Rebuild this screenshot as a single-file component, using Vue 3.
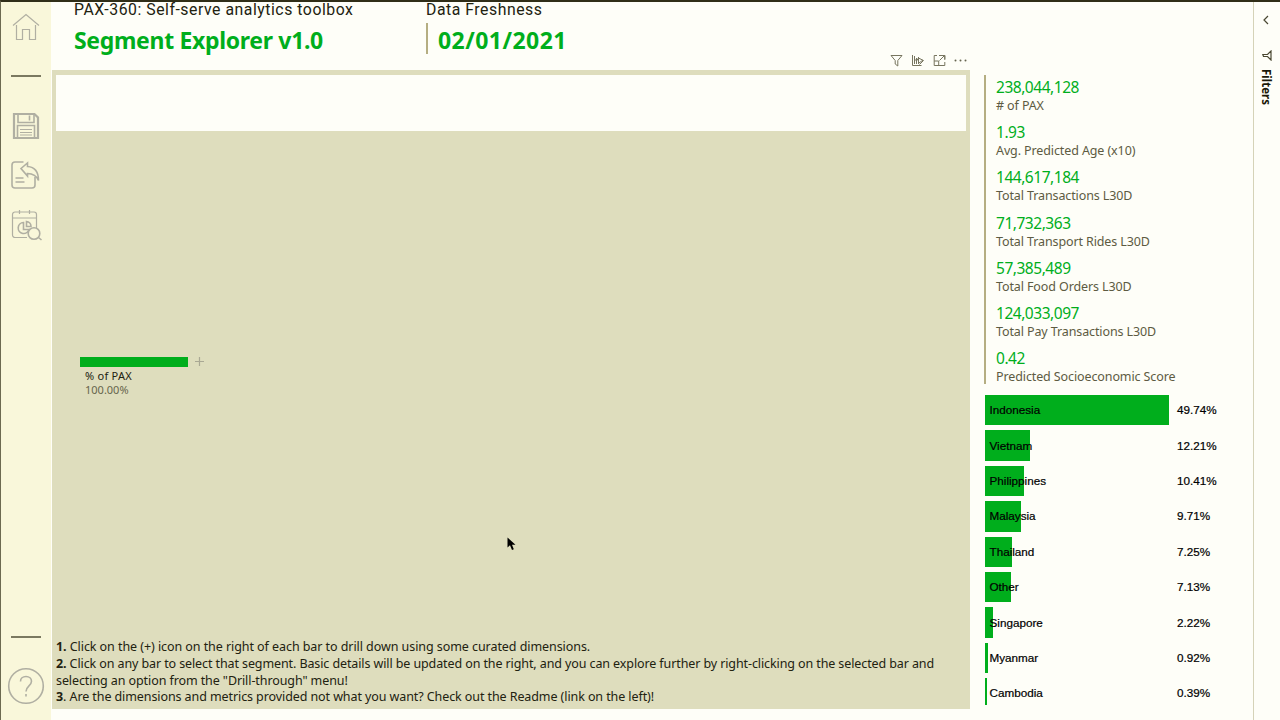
<script setup>
const metrics = [
  ['238,044,128', '# of PAX'],
  ['1.93', 'Avg. Predicted Age (x10)'],
  ['144,617,184', 'Total Transactions L30D'],
  ['71,732,363', 'Total Transport Rides L30D'],
  ['57,385,489', 'Total Food Orders L30D'],
  ['124,033,097', 'Total Pay Transactions L30D'],
  ['0.42', 'Predicted Socioeconomic Score'],
]
const countries = [
  ['Indonesia', '49.74'],
  ['Vietnam', '12.21'],
  ['Philippines', '10.41'],
  ['Malaysia', '9.71'],
  ['Thailand', '7.25'],
  ['Other', '7.13'],
  ['Singapore', '2.22'],
  ['Myanmar', '0.92'],
  ['Cambodia', '0.39'],
]
</script>

<template>
  <div class="app">
    <nav class="side">
      <svg class="home" width="30" height="28" viewBox="0 0 30 28"><path d="M2 12.500 15 1.500 28 12.500M5.500 12v14.500h6V16.500h7v10h6V12" /></svg>
      <hr class="rule" />
      <svg class="save" width="28" height="28" viewBox="0 0 28 28">
        <path class="thick" d="M2 2h20.500l3.500 3.500V26H2z" />
        <path class="mid" d="M6 2v8.500h16V2M17.500 3.500v5" />
        <path class="mid" d="M5.500 26V13.500h17V26" />
        <path class="thin" d="M8 17.500h12M8 20.500h12M8 23h12" />
      </svg>
      <svg class="share" width="30" height="30" viewBox="0 0 30 30">
        <path class="mid" d="M13.500 2H5a3 3 0 0 0-3 3v20a3 3 0 0 0 3 3h17a3 3 0 0 0 3-3v-8M5.500 18h8M5.500 22h9" />
        <path class="mid" d="M11 8.500 17.500 3v3.500c7 .5 11 5 11 14-2-5-5.500-7-11-7V16z" />
      </svg>
      <svg class="calendar" width="34" height="34" viewBox="0 0 34 34">
        <path d="M17 28.500H5A2.500 2.500 0 0 1 2.500 26V5.500A2.500 2.500 0 0 1 5 3h19a2.500 2.500 0 0 1 2.500 2.500V19M2.500 9h24M9.500 1v4M19.500 1v4" />
        <path class="mid" d="M13.500 13.500a5.500 5.500 0 1 0 5.500 7h-5.500zM16.500 12.500v5h4.500a5 5 0 0 0-4.500-5z" />
        <circle class="mid" cx="24" cy="24.500" r="5.800" />
        <path class="mid" d="m28.500 28.500 3 2.500" />
      </svg>
      <span class="spacer"></span>
      <hr class="rule" />
      <svg class="help" width="38" height="38" viewBox="0 0 38 38">
        <circle cx="19" cy="19" r="17.300" />
        <path d="M13.500 14.500c0-3 2.300-5 5.500-5s5.500 2 5.500 4.800c0 4.500-5.500 4.700-5.500 10.200M19 27v2.500" />
      </svg>
    </nav>

    <main class="center">
      <header class="head">
        <div class="block title">
          <div class="cap">PAX-360: Self-serve analytics toolbox</div>
          <div class="big">Segment Explorer v1.0</div>
        </div>
        <div class="block">
          <div class="cap fresh">Data Freshness</div>
          <div class="big date">02/01/2021</div>
        </div>
      </header>
      <div class="tools">
        <svg width="13" height="13" viewBox="0 0 13 13"><path d="M1 1.500h11L7.800 6.500V12L5.200 10V6.500z" /></svg>
        <svg width="14" height="13" viewBox="0 0 14 13"><path d="M1.500 1v10.500h9M3.500 2v8M5.500 4v6M7.500 3v7M3.500 5l2 2 2-3 5 2.500-4 4M8 9l4-3" /></svg>
        <svg width="13" height="13" viewBox="0 0 13 13"><path d="M4 1.500H1.200v10h10.600V8M1.200 7h4.500v4.500M6 1.500h5.800V6M6.500 6.500l5-5M8 1.500h3.800v3.500" /></svg>
        <svg class="dots" width="13" height="13" viewBox="0 0 13 13"><circle cx="1.500" cy="6.500" r="1" /><circle cx="6.500" cy="6.500" r="1" /><circle cx="11.500" cy="6.500" r="1" /></svg>
      </div>
      <section class="tree">
        <div class="strip"></div>
        <div class="node">
          <div class="noderow">
            <div class="nodebar"></div>
            <svg width="9" height="9" viewBox="0 0 9 9"><path d="M4.500 0v9M0 4.500h9" /></svg>
          </div>
          <div class="nodename">% of PAX</div>
          <div class="nodeval">100.00%</div>
        </div>
        <div class="notes">
          <div class="n1"><b>1.</b> Click on the (+) icon on the right of each bar to drill down using some curated dimensions.</div>
          <div class="n2"><b>2.</b> Click on any bar to select that segment. Basic details will be updated on the right, and you can explore further by right-clicking on the selected bar and</div>
          <div class="n3">selecting an option from the "Drill-through" menu!</div>
          <div class="n4"><b>3</b>. Are the dimensions and metrics provided not what you want? Check out the Readme (link on the left)!</div>
        </div>
      </section>
    </main>

    <aside class="stats">
      <div class="metrics">
        <div v-for="m in metrics" :key="m[1]" class="metric">
          <div class="val">{{ m[0] }}</div>
          <div class="lab">{{ m[1] }}</div>
        </div>
      </div>
      <div class="bars">
        <div v-for="c in countries" :key="c[0]" class="row">
          <div class="track">
            <div class="fill" :style="{ width: c[1] * 3.7 + 'px' }"></div>
            <span class="name">{{ c[0] }}</span>
          </div>
          <span class="pct">{{ c[1] }}%</span>
        </div>
      </div>
    </aside>

    <aside class="filters">
      <svg width="8" height="12" viewBox="0 0 8 12"><path d="M6 2 2 6l4 4" /></svg>
      <svg class="funnel" width="10" height="11" viewBox="0 0 10 11"><path d="M9 1v9L5.500 6.500H1.500L.8 4.500h4.700z" /></svg>
      <span class="flabel">Filters</span>
    </aside>

    <svg class="cursor" width="9" height="14" viewBox="0 0 9 14"><path d="M.5.500v10L3 8.300 5 13l1.800-.8L5 7.800h3.500z" /></svg>
  </div>
</template>

<style>
body {
  overflow: hidden;
}
</style>

<style scoped>
.app {
  position: relative;
  box-sizing: border-box;
  width: 1280px;
  height: 720px;
  display: grid;
  grid-template-columns: 50px 919px 1fr 27px;
  border-top: 2px solid #302e18;
  border-left: 1px solid #6c6a50;
  background: #fefef8;
  font-family: 'Noto Sans', 'Open Sans', sans-serif;
  color: #222210;
}
svg {
  fill: none;
  stroke: #b0afa2;
  stroke-width: 1.2;
  display: block;
  flex: none;
}
.side {
  background: #f9f7da;
  display: flex;
  flex-direction: column;
  align-items: center;
  height: 718px;
}
.thick {
  stroke-width: 2.2;
}
.mid {
  stroke-width: 1.6;
}
.thin {
  stroke-width: 1;
}
.rule {
  width: 30px;
  height: 2px;
  border: 0;
  margin: 0;
  background: #7b7960;
  flex: none;
}
.home {
  margin: 11px 0 34px;
}
.save {
  margin-top: 35px;
}
.share {
  margin: 20px 3px 0 0;
}
.calendar {
  margin: 19px 0 0 2px;
}
.spacer {
  flex: 1;
}
.help {
  margin: 29px 0 15px;
  stroke-width: 1.6;
}
.center {
  display: flex;
  flex-direction: column;
  height: 718px;
}
.head {
  display: flex;
  height: 52px;
  padding-left: 23px;
}
.title {
  width: 352px;
}
.block {
  white-space: nowrap;
}
.cap {
  font: 15.800px/18px Roboto, sans-serif;
  letter-spacing: 0.530px;
  height: 20px;
  margin-top: -1px;
}
.big {
  font-size: 23px;
  font-weight: 700;
  line-height: 34px;
  height: 31px;
  margin-top: 2px;
  color: #00ae1c;
  letter-spacing: -0.320px;
}
.date {
  border-left: 2px solid #b5ae82;
  padding-left: 10px;
  letter-spacing: 0.450px;
}
.tools {
  display: flex;
  gap: 8px;
  justify-content: flex-end;
  padding-right: 3px;
  height: 16px;
}
.tools svg {
  stroke: #77755f;
  stroke-width: 1;
}
.tools .dots {
  fill: #66644f;
  stroke: none;
}
.tree {
  margin-left: 1px;
  height: 639px;
  background: #deddbd;
  display: flex;
  flex-direction: column;
}
.strip {
  height: 56px;
  margin: 5px 4px 0;
  background: #fefef8;
  flex: none;
}
.node {
  margin: 226px 0 0 28px;
}
.noderow {
  display: flex;
  align-items: center;
  gap: 7px;
  height: 10px;
}
.noderow svg {
  stroke: #a9a894;
  margin-bottom: 2px;
}
.nodebar {
  width: 108px;
  height: 10px;
  background: #00ae1c;
}
.nodename,
.nodeval {
  font-size: 11px;
  line-height: 14px;
  margin-left: 5px;
}
.nodename {
  margin-top: 2px;
  letter-spacing: 0.250px;
}
.nodeval {
  color: #66654c;
}
.notes {
  margin: auto 0 3px 4px;
  font-size: 12.500px;
  line-height: 16.700px;
  white-space: nowrap;
  letter-spacing: -0.090px;
}
.n1 {
  letter-spacing: -0.065px;
}
.n2 {
  letter-spacing: -0.103px;
}
.stats {
  padding: 73px 0 0 15px;
}
.metrics {
  margin-left: -1px;
  border-left: 2px solid #b5ae82;
  padding-left: 10px;
  height: 309px;
}
.metric {
  height: 45.200px;
  white-space: nowrap;
}
.val {
  font-size: 15.500px;
  line-height: 25px;
  height: 22px;
  color: #00ae1c;
  letter-spacing: -0.470px;
}
.lab {
  font-size: 12.500px;
  line-height: 17px;
  color: #5d5b42;
  letter-spacing: -0.110px;
}
.bars {
  margin-top: 11px;
  font-family: 'Liberation Sans', sans-serif;
  font-size: 11.700px;
  color: #000;
  -webkit-text-stroke: 0.200px;
}
.row {
  display: flex;
  align-items: center;
  height: 30.400px;
  margin-bottom: 5px;
}
.track {
  width: 192px;
  height: 100%;
  display: grid;
  align-items: center;
}
.fill,
.name {
  grid-area: 1 / 1;
}
.fill {
  height: 100%;
  min-width: 2px;
  background: #00ae1c;
}
.row:last-child .fill {
  height: 27px;
  align-self: start;
}
.name {
  margin-left: 4.500px;
}
.name,
.pct {
  padding-bottom: 1px;
}
.filters {
  border-left: 1px solid #d5d3b8;
  display: flex;
  flex-direction: column;
  align-items: center;
  padding: 12px 2px 0 0;
}
.filters svg {
  stroke: #4a4832;
}
.filters .funnel {
  margin: 24px 0 0 2px;
}
.flabel {
  writing-mode: vertical-rl;
  font-size: 11.500px;
  font-weight: 700;
  line-height: 14px;
  margin-top: 8px;
  color: #1a1808;
}
.cursor {
  position: absolute;
  left: 506px;
  top: 535px;
  fill: #000;
  stroke: none;
}
</style>
